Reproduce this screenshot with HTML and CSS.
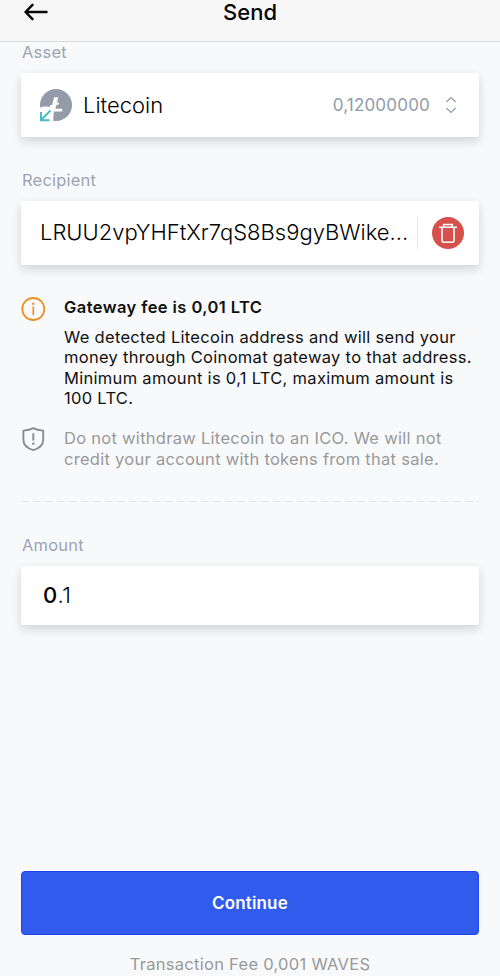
FILE: index.html
```html
<!DOCTYPE html>
<html lang="en">
<head>
<meta charset="utf-8">
<title>Send</title>
<link rel="stylesheet" href="styles.css">
</head>
<body>
<header class="header">
  <svg class="back" width="26" height="20" viewBox="0 0 26 20"><path d="M23.500 10H2.500M9.500 2.800 2.500 10l7 7.200" fill="none" stroke="#0a0a0a" stroke-width="2.500" stroke-linecap="round" stroke-linejoin="round"/></svg>
  <h1 class="title">Send</h1>
</header>
<main class="content">
  <div class="label label-asset">Asset</div>
  <div class="card asset">
    <svg class="coin" width="34" height="34" viewBox="0 0 34 34">
      <circle cx="17" cy="17" r="16" fill="#949ba8"/>
      <path d="M15.100 9.300h4.200L17.900 15l2.200-.8-.5 2.200-2.300.9-.9 3.500h6.800v2.800h-8.300L14 34H0V20.200C4 18.300 8 18.200 11.800 19.400l-1.400.5.6-2.300 2.100-.8z" fill="#fff"/>
      <path d="M11.500 22.500 2 32M2 24v8.300h8.500" fill="none" stroke="#4bbcc6" stroke-width="2"/>
    </svg>
    <span class="asset-name">Litecoin</span>
    <span class="balance">0,12000000</span>
    <svg class="chevrons" width="12" height="18" viewBox="0 0 12 18"><path d="m1.300 6 4.700-4.400L10.700 6M1.300 12l4.700 4.400L10.700 12" fill="none" stroke="#959dab" stroke-width="1.200"/></svg>
  </div>

  <div class="label label-recipient">Recipient</div>
  <div class="card recipient">
    <span class="address">LRUU2vpYHFtXr7qS8Bs9gyBWike...</span>
    <span class="divider"></span>
    <svg class="trash" width="32" height="32" viewBox="0 0 32 32">
      <circle cx="16" cy="16" r="16" fill="#d8504b"/>
      <path d="M7 10.300h18M11.700 10V7.500h8.600V10M10 10.500v13q0 1.700 1.700 1.700h8.600q1.700 0 1.700-1.700v-13" fill="none" stroke="#fff" stroke-width="1.600"/>
    </svg>
  </div>

  <section class="notice gateway">
    <svg class="notice-icon" width="24" height="24" viewBox="0 0 24 24"><circle cx="12.300" cy="12" r="11" fill="none" stroke="#ee9122" stroke-width="1.800"/><path d="M12.300 10v7.500" stroke="#ee9122" stroke-width="1.700" stroke-linecap="round"/><circle cx="12.300" cy="6.800" r="1.200" fill="#ee9122"/></svg>
    <div class="notice-body">
      <h2 class="fee-title">Gateway fee is 0,01 LTC</h2>
      <p class="text">We detected Litecoin address and will send your<br>money through Coinomat gateway to that address.<br>Minimum amount is 0,1 LTC, maximum amount is<br>100 LTC.</p>
    </div>
  </section>
  <section class="notice warning">
    <svg class="notice-icon" width="24" height="24" viewBox="0 0 24 24"><path d="M12.300 1.200c3.200 1.800 6.500 2.200 9.900 2.400v9.200c0 5-4.300 8.700-9.900 10.300C6.700 21.500 2.400 17.800 2.400 12.800V3.600C5.800 3.400 9.100 3 12.300 1.200z" fill="none" stroke="#8c8c8c" stroke-width="1.900" stroke-linejoin="round"/><path d="M12.300 7V12.800" stroke="#8c8c8c" stroke-width="1.900" stroke-linecap="round"/><circle cx="12.300" cy="16.700" r="1.200" fill="#8c8c8c"/></svg>
    <p class="text muted">Do not withdraw Litecoin to an ICO. We will not<br>credit your account with tokens from that sale.</p>
  </section>
  <div class="dashes"></div>

  <div class="label label-amount">Amount</div>
  <div class="card amount"><span><b>0</b>.1</span></div>
  <button class="continue">Continue</button>
  <p class="fee">Transaction Fee 0,001 WAVES</p>
</main>
</body>
</html>
```
FILE: styles.css
```css
* { box-sizing: border-box; margin: 0; padding: 0; }
body {
  height: 976px;
  overflow: hidden;
  background: #f8f9fb;
  color: #111;
  font-family: Inter, "Liberation Sans", sans-serif;
}
svg { display: block; flex: none; }
.header {
  display: grid;
  grid-template-columns: 80px 1fr 80px;
  height: 42px;
  padding-top: 2px;
  background: #f7f7f7;
  border-bottom: 1px solid #d8dadb;
}
.back { margin-left: 23px; }
.title { text-align: center; font-size: 22px; line-height: 20px; font-weight: 500; color: #050505; }
.content { padding: 0 22px; }
.label { height: 20px; line-height: 20px; font-size: 16.5px; color: #9ca4b3; letter-spacing: .2px; }
.label-recipient { margin-top: 33px; }
.card {
  display: flex;
  align-items: center;
  height: 64px;
  margin: 11px -1px 0;
  width: 458px;
  background: #fff;
  border-radius: 3px;
  box-shadow: 0 5px 11px rgba(0, 0, 0, .13), 0 1px 9px rgba(0, 0, 0, .04);
}
.asset { padding: 0 22px 0 18px; }
.asset-name { margin-left: 10px; font-size: 22px; font-weight: 350; color: #000; }
.balance { margin-left: auto; margin-right: 15px; font-size: 17px; color: #929baa; letter-spacing: .2px; }
.recipient { padding: 0 15px 0 19px; }
.address { width: 377px; white-space: nowrap; font-size: 22px; line-height: 26px; margin-top: -2px; font-weight: 350; color: #000; }
.divider { width: 1px; height: 32px; background: #e2e3e5; }
.trash { margin-left: auto; }
.notice { display: flex; gap: 19px; margin-left: -1px; }
.gateway { margin-top: 32px; }
.fee-title { height: 20px; line-height: 20px; font-size: 16.5px; font-weight: 600; letter-spacing: .42px; }
.text { margin-top: 9.5px; line-height: 20.5px; font-size: 16.5px; white-space: nowrap; letter-spacing: .3px; }
.warning { margin-top: 19.5px; }
.warning .text { margin-top: 0; letter-spacing: .28px; }
.warning .notice-icon { margin-top: -1px; }
.muted { color: #999; }
.dashes { height: 1px; margin: 32px -1px 0; background: repeating-linear-gradient(90deg, #e6e7e9 0 8px, transparent 8px 12px); }
.label-amount { margin-top: 33px; }
.amount { height: 59px; padding: 0 0 2px 22px; font-size: 22px; font-weight: 350; color: #000; letter-spacing: .4px; }
.amount b { font-weight: 500; }
.continue {
  display: block;
  width: 458px;
  height: 64px;
  margin: 246px -1px 0;
  border: 1px solid #1d42ee;
  border-radius: 4px;
  background: #305bed;
  color: #fff;
  font: 600 17px Inter, "Liberation Sans", sans-serif;
  letter-spacing: .15px;
}
.fee { margin-top: 19px; height: 20px; line-height: 20px; text-align: center; font-size: 16.5px; color: #999; letter-spacing: .28px; }
```
